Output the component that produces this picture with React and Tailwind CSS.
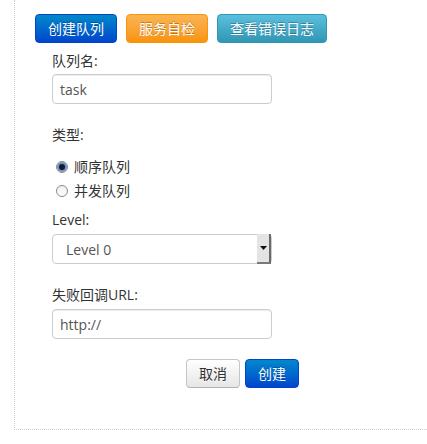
import React from "react";

const font = { fontFamily: "'Open Sans','Noto Sans CJK SC',sans-serif" };

function Btn({ children, cls }) {
  return (
    <button
      className={`h-[29px] rounded-[4px] border px-[12px] text-[14px] leading-[20px] text-white [text-shadow:0_-1px_0_rgba(0,0,0,0.25)] ${cls}`}
    >
      {children}
    </button>
  );
}

function Radio({ checked, label }) {
  return (
    <div className="flex h-[24px] items-center">
      <span className="ml-[4px] flex h-[12px] w-[12px] items-center justify-center rounded-full border border-[#8a8a8a] bg-gradient-to-b from-[#f0f0f0] to-white">
        {checked && <span className="h-[6px] w-[6px] rounded-full bg-[#1a1a2a] ring-2 ring-[#6f93c8]" />}
      </span>
      <span className="ml-[6px] text-[14px] leading-[20px] text-[#333]">{label}</span>
    </div>
  );
}

export default function App() {
  return (
    <div className="min-h-[444px] bg-white" style={font}>
      <div className="ml-[14px] h-[430px] border-b border-l border-dotted border-[#cfcfcf] pl-[20px] pt-[14px]">
        <div className="flex gap-[9px]">
          <Btn cls="w-[82px] border-[#0044cc] bg-gradient-to-b from-[#0088cc] to-[#0044cc]">创建队列</Btn>
          <Btn cls="w-[82px] border-[#f89406] bg-gradient-to-b from-[#fbb450] to-[#f89406]">服务自检</Btn>
          <Btn cls="w-[110px] border-[#2f96b4] bg-gradient-to-b from-[#5bc0de] to-[#2f96b4]">查看错误日志</Btn>
        </div>
        <div className="ml-[17px] w-[230px]">
          <div className="mt-[8px] text-[14px] leading-[20px] text-[#333]">队列名:</div>
          <div className="mt-[3px] flex h-[30px] w-[220px] items-center rounded-[4px] border border-[#cccccc] px-[7px] text-[14px] text-[#555] shadow-[inset_0_1px_1px_rgba(0,0,0,0.075)]">
            task
          </div>
          <div className="mt-[21px] text-[14px] leading-[20px] text-[#333]">类型:</div>
          <div className="mt-[10px]">
            <Radio checked label="顺序队列" />
            <Radio label="并发队列" />
          </div>
          <div className="mt-[7px] text-[14px] leading-[20px] text-[#333]">Level:</div>
          <div className="mt-[4px] flex h-[30px] w-[220px] items-stretch rounded-[4px] border border-[#cccccc] text-[14px] text-[#555]">
            <div className="flex flex-1 items-center pl-[13px]">Level 0</div>
            <div className="my-[-1px] flex w-[14px] items-center justify-center border-b-[2px] border-r-[2px] border-b-[#7a7a7a] border-r-[#6a6a6a] bg-[#e4e4e4]">
              <svg width="7" height="4" viewBox="0 0 7 4">
                <path d="M0 0h7L3.5 4z" fill="#111" />
              </svg>
            </div>
          </div>
          <div className="mt-[21px] text-[14px] leading-[20px] text-[#333]">失败回调URL:</div>
          <div className="mt-[4px] flex h-[30px] w-[220px] items-center rounded-[4px] border border-[#cccccc] px-[7px] text-[14px] text-[#555] shadow-[inset_0_1px_1px_rgba(0,0,0,0.075)]">
            http://
          </div>
        </div>
        <div className="ml-[151px] mt-[20px] flex gap-[5px]">
          <button className="h-[29px] w-[54px] rounded-[4px] border border-[#c5c5c5] border-b-[#b3b3b3] bg-gradient-to-b from-white to-[#e6e6e6] text-[14px] leading-[20px] text-[#333] [text-shadow:0_1px_1px_rgba(255,255,255,0.75)]">
            取消
          </button>
          <Btn cls="w-[54px] border-[#0044cc] bg-gradient-to-b from-[#0088cc] to-[#0044cc]">创建</Btn>
        </div>
      </div>
    </div>
  );
}
